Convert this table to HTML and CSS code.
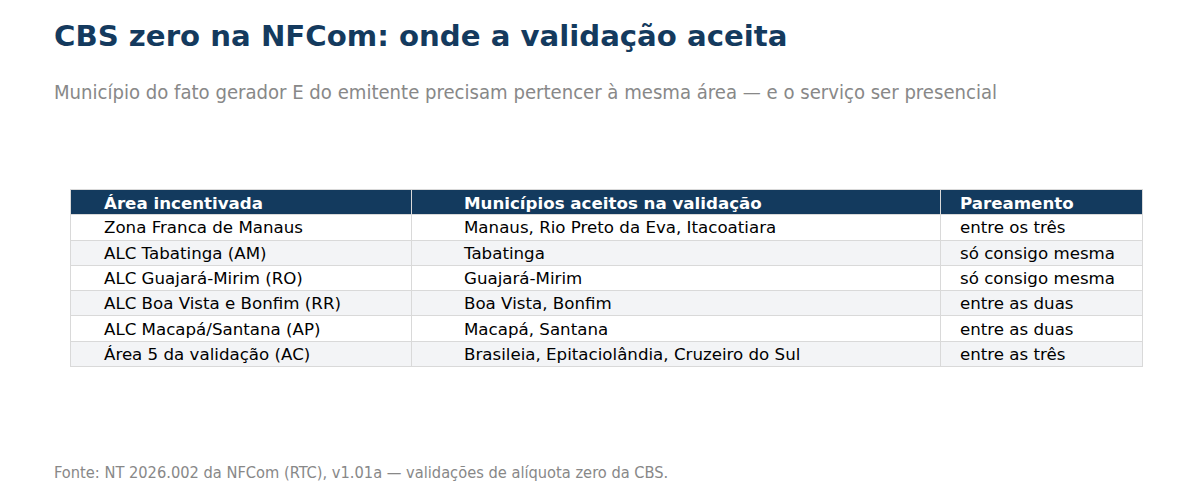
FILE: index.html
```html
<!DOCTYPE html>
<html lang="pt">
<head>
<meta charset="utf-8">
<link rel="stylesheet" href="styles.css">
</head>
<body>
<div class="page">
  <h1 class="title">CBS zero na NFCom: onde a validação aceita</h1>
  <p class="subtitle">Município do fato gerador E do emitente precisam pertencer à mesma área — e o serviço ser presencial</p>
  <div class="table-wrap">
    <table class="grid">
      <thead>
        <tr><th class="c1">Área incentivada</th><th class="c2">Municípios aceitos na validação</th><th class="c3">Pareamento</th></tr>
      </thead>
      <tbody>
        <tr><td class="c1">Zona Franca de Manaus</td><td class="c2">Manaus, Rio Preto da Eva, Itacoatiara</td><td class="c3">entre os três</td></tr>
        <tr class="alt"><td class="c1">ALC Tabatinga (AM)</td><td class="c2">Tabatinga</td><td class="c3">só consigo mesma</td></tr>
        <tr><td class="c1">ALC Guajará-Mirim (RO)</td><td class="c2">Guajará-Mirim</td><td class="c3">só consigo mesma</td></tr>
        <tr class="alt"><td class="c1">ALC Boa Vista e Bonfim (RR)</td><td class="c2">Boa Vista, Bonfim</td><td class="c3">entre as duas</td></tr>
        <tr><td class="c1">ALC Macapá/Santana (AP)</td><td class="c2">Macapá, Santana</td><td class="c3">entre as duas</td></tr>
        <tr class="alt"><td class="c1">Área 5 da validação (AC)</td><td class="c2">Brasileia, Epitaciolândia, Cruzeiro do Sul</td><td class="c3">entre as três</td></tr>
      </tbody>
    </table>
  </div>
  <p class="footer">Fonte: NT 2026.002 da NFCom (RTC), v1.01a — validações de alíquota zero da CBS.</p>
</div>
</body>
</html>
```

FILE: styles.css
```css
html, body {
  margin: 0;
  padding: 0;
  background: #ffffff;
}
.page {
  width: 1200px;
  height: 501px;
  box-sizing: border-box;
  padding: 17px 0 0 54px;
  display: flex;
  flex-direction: column;
  font-family: "DejaVu Sans", sans-serif;
}
.title {
  margin: 0;
  font-family: "DejaVu Sans", sans-serif;
  font-weight: bold;
  font-size: 29.2px;
  line-height: 38px;
  color: #143a5e;
}
.subtitle {
  margin: 25px 0 0 0;
  font-family: "DejaVu Sans Condensed", "DejaVu Sans", sans-serif;
  font-stretch: condensed;
  font-size: 20.1px;
  line-height: 24px;
  color: #888888;
}
.table-wrap {
  margin: 85px 0 0 16px;
}
.grid {
  border-collapse: collapse;
  width: 1073px;
  font-family: "DejaVu Sans", sans-serif;
  font-size: 16.67px;
  color: #000000;
}
.grid th, .grid td {
  border: 1px solid #d9d9d9;
  padding: 0;
  text-align: left;
  white-space: nowrap;
  line-height: 20px;
  vertical-align: middle;
}
.grid th {
  background: #133a5e;
  color: #ffffff;
  font-weight: bold;
  padding-top: 3px;
  height: 21.3px;
}
.grid td {
  padding-top: 2px;
  height: 22.3px;
}
.grid tr.alt td {
  background: #f3f4f6;
}
.c1 { width: 307px; padding-left: 33px !important; }
.c2 { width: 476px; padding-left: 52px !important; }
.c3 { width: 182px; padding-left: 19px !important; }
.footer {
  margin: 97px 0 0 0;
  font-family: "DejaVu Sans Condensed", "DejaVu Sans", sans-serif;
  font-stretch: condensed;
  font-size: 16.3px;
  line-height: 18px;
  color: #888888;
}
```
